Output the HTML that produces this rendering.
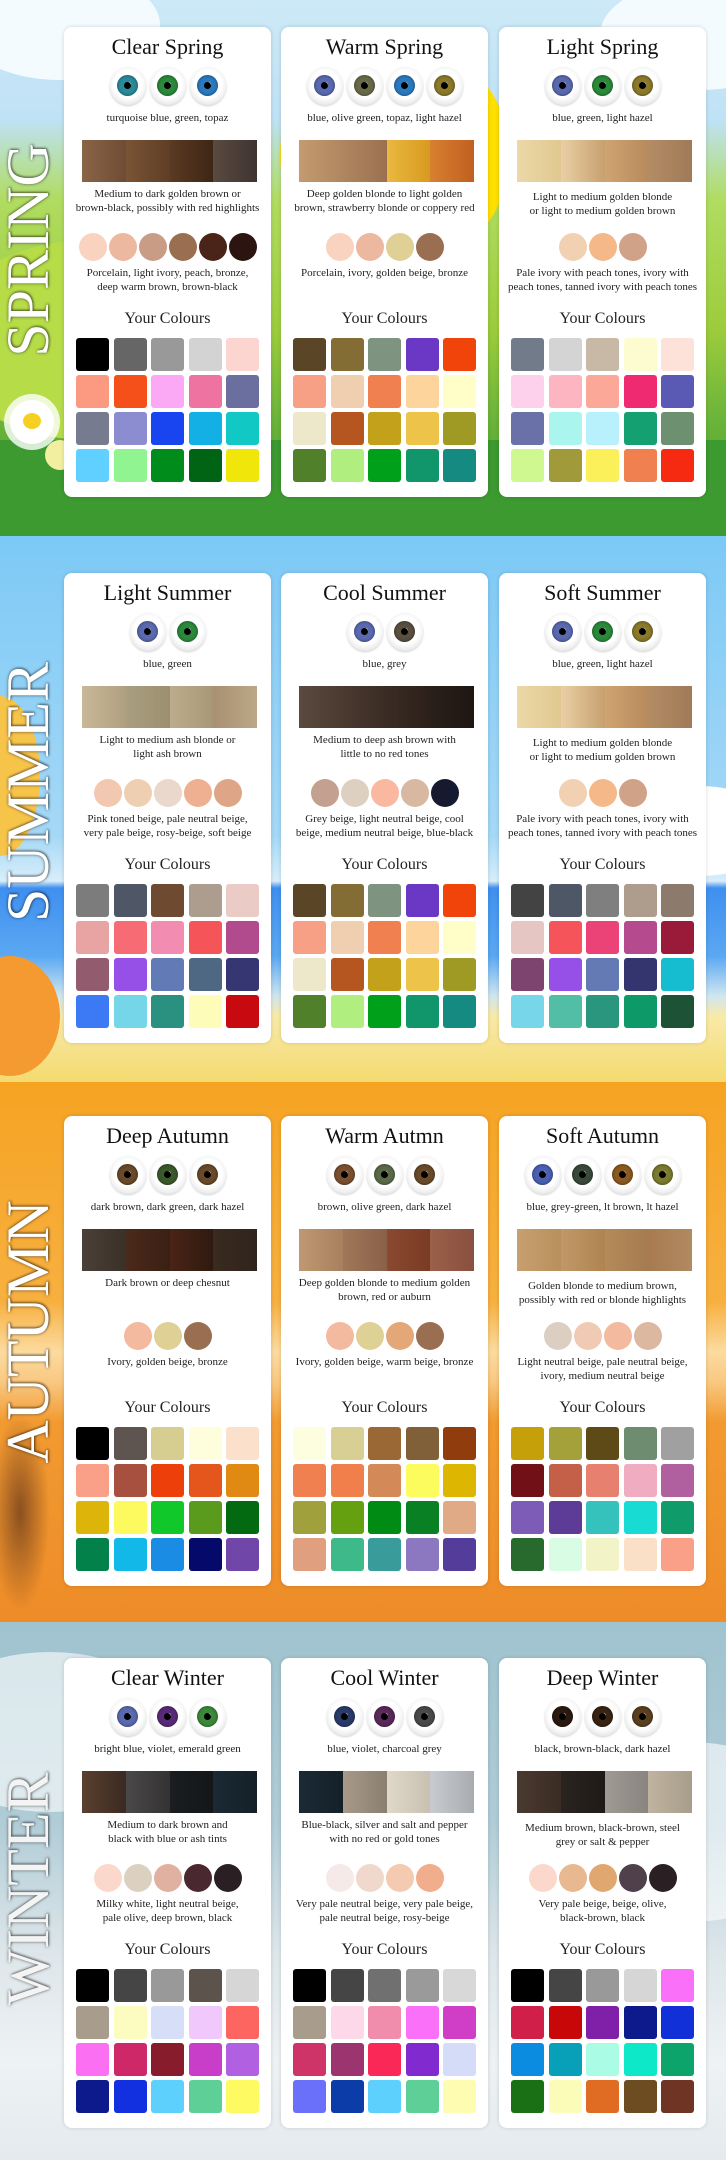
<!DOCTYPE html>
<html><head><meta charset="utf-8">
<style>
*{margin:0;padding:0;box-sizing:border-box}
body{width:726px;height:2160px;position:relative;overflow:hidden;font-family:"Liberation Serif",serif;color:#222}
.sec{position:absolute;left:0;width:726px;overflow:hidden}
.card{position:absolute;width:207px;height:470px;background:#fff;border-radius:8px;box-shadow:0 0 4px rgba(0,0,0,.15)}
.t{position:absolute;top:6px;left:0;width:100%;text-align:center;font-size:22px;line-height:28px;color:#111}
.eyes{position:absolute;top:40px;left:0;width:100%;text-align:center;height:38px;font-size:0}
.eye{display:inline-block;position:relative;width:36px;height:38px;margin:0 2px;border-radius:50%;background:radial-gradient(circle at 50% 45%,#fff 50%,#eee 70%,#c8c8c8 100%);box-shadow:0 1px 2px rgba(0,0,0,.2)}
.eye i{position:absolute;left:7.5px;top:8px;width:21px;height:21px;border-radius:50%;box-shadow:inset 0 0 3px rgba(0,0,0,.5)}
.eye i:after{content:"";position:absolute;left:7px;top:7px;width:7px;height:7px;border-radius:50%;background:#000;box-shadow:1px -1px 0 -1px #fff}
.tx{position:absolute;left:0;width:100%;text-align:center;font-size:11px;line-height:14px}
.et{top:84px}
.hair{position:absolute;top:113px;left:18px;width:175px;height:42px;display:flex}
.hair span{flex:1}
.ht{top:160px}
.skin{position:absolute;top:206px;left:0;width:100%;text-align:center;font-size:0;height:28px}
.skin span{display:inline-block;width:28px;height:28px;border-radius:50%;margin:0 1px}
.st{top:239px}
.yc{position:absolute;top:282px;left:0;width:100%;text-align:center;font-size:16px;line-height:20px}
.sw{position:absolute;top:311px;left:12px;width:190px;font-size:0}
.sw b{display:inline-block;width:33px;height:33px;border-radius:3px;margin:0 4.5px 4px 0;vertical-align:top}
.lab{position:absolute;left:-122px;width:300px;height:60px;line-height:60px;text-align:center;font-size:60px;color:#fff;transform:rotate(-90deg);text-shadow:0 0 3px rgba(0,0,0,.55),1px 1px 2px rgba(0,0,0,.4)}
</style></head><body>

<!-- SPRING -->
<div class="sec" style="top:0;height:536px;background:linear-gradient(#cde9f7 0,#bfe2f5 120px,#b0dc60 200px,#9ccc3c 330px,#6bb43a 420px,#3f9a2e 536px)">
 <div style="position:absolute;left:280px;top:40px;width:230px;height:230px;border-radius:50%;background:#ffe000"></div>
 <div style="position:absolute;left:-40px;top:-30px;width:200px;height:110px;border-radius:50%;background:#f4fbff"></div>
 <div style="position:absolute;left:600px;top:-20px;width:200px;height:110px;border-radius:50%;background:#f4fbff"></div>
 <div style="position:absolute;left:-60px;top:240px;width:300px;height:200px;border-radius:50%;background:#b6dc48"></div>
 <div style="position:absolute;left:0;top:440px;width:726px;height:96px;background:#3c9a30"></div>
 <div style="position:absolute;left:10px;top:400px;width:44px;height:44px;border-radius:50%;background:#fff;box-shadow:0 0 0 6px rgba(255,255,255,.8)"></div>
 <div style="position:absolute;left:23px;top:413px;width:18px;height:16px;border-radius:50%;background:#f5d020"></div>
 <div style="position:absolute;left:45px;top:440px;width:30px;height:30px;border-radius:50%;background:#f3efa0"></div>
</div>
<div class="lab" style="top:220px">SPRING</div>

<!-- SUMMER -->
<div class="sec" style="top:536px;height:546px;background:linear-gradient(#7cc9f6 0,#a5d8f6 300px,#d8eefa 345px,#3f8ff0 352px,#5aa8f2 420px,#cfe6f0 460px,#f8eaa8 480px,#f5da70 546px)">
 <div style="position:absolute;left:620px;top:250px;width:160px;height:90px;border-radius:50%;background:#fff"></div>
 <div style="position:absolute;left:-40px;top:420px;width:100px;height:120px;border-radius:50%;background:#f49a30"></div>
 <div style="position:absolute;left:-40px;top:160px;width:80px;height:160px;border-radius:50%;background:#f7c44a"></div>
</div>
<div class="lab" style="top:762px">SUMMER</div>

<!-- AUTUMN -->
<div class="sec" style="top:1082px;height:540px;background:linear-gradient(#f6a322 0,#f7b040 220px,#fcdba0 270px,#f9c880 300px,#f29a30 340px,#ee8c28 540px)">
 <div style="position:absolute;left:-10px;top:330px;width:60px;height:200px;background:radial-gradient(#8a5020,transparent 70%)"></div>
</div>
<div class="lab" style="top:1302px">AUTUMN</div>

<!-- WINTER -->
<div class="sec" style="top:1622px;height:538px;background:linear-gradient(#9fc3cf 0,#b0ccd6 200px,#dde6ea 330px,#eef2f4 440px,#e4eaee 538px)">
 <div style="position:absolute;left:-80px;top:30px;width:260px;height:160px;border-radius:50%;background:rgba(255,255,255,.6)"></div>
 <div style="position:absolute;left:560px;top:120px;width:260px;height:180px;border-radius:50%;background:rgba(255,255,255,.6)"></div>
</div>
<div class="lab" style="top:1859px;color:#f4f4f4">WINTER</div>

<!-- ===== SPRING CARDS ===== -->
<div class="card" style="left:64px;top:27px">
 <div class="t">Clear Spring</div>
 <div class="eyes"><span class="eye"><i style="background:#2a8a9a"></i></span><span class="eye"><i style="background:#2a8a3a"></i></span><span class="eye"><i style="background:#2a7ac0"></i></span></div>
 <div class="tx et">turquoise blue, green, topaz</div>
 <div class="hair"><span style="background:linear-gradient(90deg,#8a6446,#6e4c34)"></span><span style="background:linear-gradient(90deg,#7a5434,#5e3e26)"></span><span style="background:linear-gradient(90deg,#5a3a22,#3e2616)"></span><span style="background:linear-gradient(90deg,#5a4a40,#3e3430)"></span></div>
 <div class="tx ht">Medium to dark golden brown or<br>brown-black, possibly with red highlights</div>
 <div class="skin"><span style="background:#f9d3c0"></span><span style="background:#ecb8a0"></span><span style="background:#c99c85"></span><span style="background:#9a6e50"></span><span style="background:#4a2418"></span><span style="background:#2c1510"></span></div>
 <div class="tx st">Porcelain, light ivory, peach, bronze,<br>deep warm brown, brown-black</div>
 <div class="yc">Your Colours</div>
 <div class="sw"><b style="background:#000"></b><b style="background:#666"></b><b style="background:#999"></b><b style="background:#d3d3d3"></b><b style="background:#fdd5d0"></b><b style="background:#fb9a80"></b><b style="background:#f5501a"></b><b style="background:#fba8f5"></b><b style="background:#ef73a1"></b><b style="background:#6a6fa0"></b><b style="background:#777b90"></b><b style="background:#8b8dd0"></b><b style="background:#1845f0"></b><b style="background:#12b0e5"></b><b style="background:#12c8c5"></b><b style="background:#5fd0ff"></b><b style="background:#90f590"></b><b style="background:#008c1a"></b><b style="background:#006414"></b><b style="background:#f0e60a"></b></div>
</div>

<div class="card" style="left:281px;top:27px">
 <div class="t">Warm Spring</div>
 <div class="eyes"><span class="eye"><i style="background:#5a6ab0"></i></span><span class="eye"><i style="background:#6a6a4a"></i></span><span class="eye"><i style="background:#2a7ac0"></i></span><span class="eye"><i style="background:#8a7a2a"></i></span></div>
 <div class="tx et">blue, olive green, topaz, light hazel</div>
 <div class="hair"><span style="background:linear-gradient(90deg,#c49a70,#b08660)"></span><span style="background:linear-gradient(90deg,#b08660,#9a7050)"></span><span style="background:linear-gradient(90deg,#eab840,#d89a20)"></span><span style="background:linear-gradient(90deg,#d88030,#c06020)"></span></div>
 <div class="tx ht">Deep golden blonde to light golden<br>brown, strawberry blonde or coppery red</div>
 <div class="skin"><span style="background:#f9d3c0"></span><span style="background:#ecb8a0"></span><span style="background:#dfd096"></span><span style="background:#9a6e50"></span></div>
 <div class="tx st">Porcelain, ivory, golden beige, bronze</div>
 <div class="yc">Your Colours</div>
 <div class="sw"><b style="background:#5a4526"></b><b style="background:#846c35"></b><b style="background:#7f9480"></b><b style="background:#6a38c5"></b><b style="background:#f0440a"></b><b style="background:#f8a086"></b><b style="background:#efcfb0"></b><b style="background:#f08050"></b><b style="background:#fdd49c"></b><b style="background:#fffdc8"></b><b style="background:#eee8ca"></b><b style="background:#b55620"></b><b style="background:#c4a11a"></b><b style="background:#eec34a"></b><b style="background:#9f9a24"></b><b style="background:#50802a"></b><b style="background:#b0ee80"></b><b style="background:#00a01a"></b><b style="background:#10966a"></b><b style="background:#158a80"></b></div>
</div>

<div class="card" style="left:499px;top:27px">
 <div class="t">Light Spring</div>
 <div class="eyes"><span class="eye"><i style="background:#5a6ab0"></i></span><span class="eye"><i style="background:#2a8a3a"></i></span><span class="eye"><i style="background:#8a7a2a"></i></span></div>
 <div class="tx et">blue, green, light hazel</div>
 <div class="hair"><span style="background:linear-gradient(90deg,#ecd8a8,#e0c890)"></span><span style="background:linear-gradient(90deg,#e8d0a4,#c8a070)"></span><span style="background:linear-gradient(90deg,#d0a470,#b88a5c)"></span><span style="background:linear-gradient(90deg,#b48c64,#a07a58)"></span></div>
 <div class="tx ht" style="top:163px">Light to medium golden blonde<br>or light to medium golden brown</div>
 <div class="skin"><span style="background:#f2d0b2"></span><span style="background:#f5b888"></span><span style="background:#d0a288"></span></div>
 <div class="tx st">Pale ivory with peach tones, ivory with<br>peach tones, tanned ivory with peach tones</div>
 <div class="yc">Your Colours</div>
 <div class="sw"><b style="background:#717b8a"></b><b style="background:#d4d4d4"></b><b style="background:#c8b9a6"></b><b style="background:#fdfcd0"></b><b style="background:#fde2da"></b><b style="background:#fdd0ec"></b><b style="background:#fdb5c2"></b><b style="background:#fba898"></b><b style="background:#ef2a70"></b><b style="background:#5a5ab5"></b><b style="background:#6a70a8"></b><b style="background:#aaf5ee"></b><b style="background:#b8f0fb"></b><b style="background:#14a070"></b><b style="background:#6c9070"></b><b style="background:#d0f890"></b><b style="background:#a09a3a"></b><b style="background:#fbf05a"></b><b style="background:#f08050"></b><b style="background:#f52a10"></b></div>
</div>

<!-- ===== SUMMER CARDS ===== -->
<div class="card" style="left:64px;top:573px">
 <div class="t">Light Summer</div>
 <div class="eyes"><span class="eye"><i style="background:#5a6ab0"></i></span><span class="eye"><i style="background:#2a8a3a"></i></span></div>
 <div class="tx et">blue, green</div>
 <div class="hair"><span style="background:linear-gradient(90deg,#c8b898,#b0a080)"></span><span style="background:linear-gradient(90deg,#aa9e80,#9c9070)"></span><span style="background:linear-gradient(90deg,#bcac8c,#a89878)"></span><span style="background:linear-gradient(90deg,#a89070,#bca888)"></span></div>
 <div class="tx ht">Light to medium ash blonde or<br>light ash brown</div>
 <div class="skin"><span style="background:#f2c8b0"></span><span style="background:#efcfb2"></span><span style="background:#ead8cc"></span><span style="background:#eeb090"></span><span style="background:#dea586"></span></div>
 <div class="tx st">Pink toned beige, pale neutral beige,<br>very pale beige, rosy-beige, soft beige</div>
 <div class="yc">Your Colours</div>
 <div class="sw"><b style="background:#7c7c7c"></b><b style="background:#4f5666"></b><b style="background:#6d4a30"></b><b style="background:#ac9d8e"></b><b style="background:#ebcbc6"></b><b style="background:#e8a3a3"></b><b style="background:#f76b75"></b><b style="background:#f28cb0"></b><b style="background:#f55458"></b><b style="background:#b24a8e"></b><b style="background:#935c6e"></b><b style="background:#9650e8"></b><b style="background:#627ab5"></b><b style="background:#4e6884"></b><b style="background:#363672"></b><b style="background:#3c7af5"></b><b style="background:#74d6e8"></b><b style="background:#2a9080"></b><b style="background:#fdfcb8"></b><b style="background:#c80a10"></b></div>
</div>

<div class="card" style="left:281px;top:573px">
 <div class="t">Cool Summer</div>
 <div class="eyes"><span class="eye"><i style="background:#5a6ab0"></i></span><span class="eye"><i style="background:#5a5040"></i></span></div>
 <div class="tx et">blue, grey</div>
 <div class="hair"><span style="background:linear-gradient(90deg,#5a4a40,#4a3a30)"></span><span style="background:linear-gradient(90deg,#4a3a30,#3a2c24)"></span><span style="background:linear-gradient(90deg,#3a2c24,#2c2019)"></span><span style="background:linear-gradient(90deg,#2a201a,#1e1612)"></span></div>
 <div class="tx ht">Medium to deep ash brown with<br>little to no red tones</div>
 <div class="skin"><span style="background:#c4a090"></span><span style="background:#ddd0c0"></span><span style="background:#fab8a0"></span><span style="background:#d8b8a0"></span><span style="background:#161a30"></span></div>
 <div class="tx st">Grey beige, light neutral beige, cool<br>beige, medium neutral beige, blue-black</div>
 <div class="yc">Your Colours</div>
 <div class="sw"><b style="background:#5a4526"></b><b style="background:#846c35"></b><b style="background:#7f9480"></b><b style="background:#6a38c5"></b><b style="background:#f0440a"></b><b style="background:#f8a086"></b><b style="background:#efcfb0"></b><b style="background:#f08050"></b><b style="background:#fdd49c"></b><b style="background:#fffdc8"></b><b style="background:#eee8ca"></b><b style="background:#b55620"></b><b style="background:#c4a11a"></b><b style="background:#eec34a"></b><b style="background:#9f9a24"></b><b style="background:#50802a"></b><b style="background:#b0ee80"></b><b style="background:#00a01a"></b><b style="background:#10966a"></b><b style="background:#158a80"></b></div>
</div>

<div class="card" style="left:499px;top:573px">
 <div class="t">Soft Summer</div>
 <div class="eyes"><span class="eye"><i style="background:#5a6ab0"></i></span><span class="eye"><i style="background:#2a8a3a"></i></span><span class="eye"><i style="background:#8a7a2a"></i></span></div>
 <div class="tx et">blue, green, light hazel</div>
 <div class="hair"><span style="background:linear-gradient(90deg,#ecd8a8,#e0c890)"></span><span style="background:linear-gradient(90deg,#e8d0a4,#c8a070)"></span><span style="background:linear-gradient(90deg,#d0a470,#b88a5c)"></span><span style="background:linear-gradient(90deg,#b48c64,#a07a58)"></span></div>
 <div class="tx ht" style="top:163px">Light to medium golden blonde<br>or light to medium golden brown</div>
 <div class="skin"><span style="background:#f2d0b2"></span><span style="background:#f5b888"></span><span style="background:#d0a288"></span></div>
 <div class="tx st">Pale ivory with peach tones, ivory with<br>peach tones, tanned ivory with peach tones</div>
 <div class="yc">Your Colours</div>
 <div class="sw"><b style="background:#434343"></b><b style="background:#4e5766"></b><b style="background:#7f7f7f"></b><b style="background:#ae9c8c"></b><b style="background:#8c7b6c"></b><b style="background:#e5c6c2"></b><b style="background:#f5545a"></b><b style="background:#eb4278"></b><b style="background:#b64a8e"></b><b style="background:#9a1a3a"></b><b style="background:#7e4470"></b><b style="background:#9650e8"></b><b style="background:#647ab5"></b><b style="background:#34346e"></b><b style="background:#16bcd0"></b><b style="background:#78d6ea"></b><b style="background:#52bea6"></b><b style="background:#2a967e"></b><b style="background:#0e9a68"></b><b style="background:#1e5236"></b></div>
</div>

<!-- ===== AUTUMN CARDS ===== -->
<div class="card" style="left:64px;top:1116px">
 <div class="t">Deep Autumn</div>
 <div class="eyes"><span class="eye"><i style="background:#6a4a2a"></i></span><span class="eye"><i style="background:#3a5a2a"></i></span><span class="eye"><i style="background:#6a4a2a"></i></span></div>
 <div class="tx et">dark brown, dark green, dark hazel</div>
 <div class="hair"><span style="background:linear-gradient(90deg,#4a4038,#3a3028)"></span><span style="background:linear-gradient(90deg,#4a2a1a,#3a2014)"></span><span style="background:linear-gradient(90deg,#4a2416,#2e1a10)"></span><span style="background:linear-gradient(90deg,#3a2a20,#30241c)"></span></div>
 <div class="tx ht">Dark brown or deep chesnut</div>
 <div class="skin"><span style="background:#f3baa0"></span><span style="background:#dfd096"></span><span style="background:#9a6e50"></span></div>
 <div class="tx st">Ivory, golden beige, bronze</div>
 <div class="yc">Your Colours</div>
 <div class="sw"><b style="background:#000"></b><b style="background:#5e5550"></b><b style="background:#d6cd90"></b><b style="background:#fefedc"></b><b style="background:#fbe0cc"></b><b style="background:#fba088"></b><b style="background:#a85040"></b><b style="background:#ec3f0a"></b><b style="background:#e4561c"></b><b style="background:#e08a14"></b><b style="background:#dcb40a"></b><b style="background:#fdfa60"></b><b style="background:#10c82a"></b><b style="background:#5a9a1c"></b><b style="background:#046a12"></b><b style="background:#02824a"></b><b style="background:#12b8e8"></b><b style="background:#1a8ce4"></b><b style="background:#050a6a"></b><b style="background:#7046a8"></b></div>
</div>

<div class="card" style="left:281px;top:1116px">
 <div class="t">Warm Autmn</div>
 <div class="eyes"><span class="eye"><i style="background:#7a5030"></i></span><span class="eye"><i style="background:#5a6a4a"></i></span><span class="eye"><i style="background:#6a4a2a"></i></span></div>
 <div class="tx et">brown, olive green, dark hazel</div>
 <div class="hair"><span style="background:linear-gradient(90deg,#c09870,#a88060)"></span><span style="background:linear-gradient(90deg,#a07858,#8a6048)"></span><span style="background:linear-gradient(90deg,#8a4a30,#7a3a24)"></span><span style="background:linear-gradient(90deg,#9a6048,#8a5040)"></span></div>
 <div class="tx ht">Deep golden blonde to medium golden<br>brown, red or auburn</div>
 <div class="skin"><span style="background:#f3baa0"></span><span style="background:#dfd096"></span><span style="background:#e4a878"></span><span style="background:#9a6e50"></span></div>
 <div class="tx st">Ivory, golden beige, warm beige, bronze</div>
 <div class="yc">Your Colours</div>
 <div class="sw"><b style="background:#fdfde0"></b><b style="background:#d8cf94"></b><b style="background:#9a6834"></b><b style="background:#806038"></b><b style="background:#903c0c"></b><b style="background:#f08050"></b><b style="background:#f07f4c"></b><b style="background:#d48a58"></b><b style="background:#fcfc5e"></b><b style="background:#dcb600"></b><b style="background:#a0a03c"></b><b style="background:#64a010"></b><b style="background:#008c14"></b><b style="background:#0a8024"></b><b style="background:#e0aa86"></b><b style="background:#e0a080"></b><b style="background:#3eba8a"></b><b style="background:#3a9c9a"></b><b style="background:#8c78c0"></b><b style="background:#543c9a"></b></div>
</div>

<div class="card" style="left:499px;top:1116px">
 <div class="t">Soft Autumn</div>
 <div class="eyes"><span class="eye"><i style="background:#4a60b0"></i></span><span class="eye"><i style="background:#3a4a3a"></i></span><span class="eye"><i style="background:#8a5a20"></i></span><span class="eye"><i style="background:#7a7a30"></i></span></div>
 <div class="tx et">blue, grey-green, lt brown, lt hazel</div>
 <div class="hair"><span style="background:linear-gradient(90deg,#c8a070,#b8905c)"></span><span style="background:linear-gradient(90deg,#c09868,#b08450)"></span><span style="background:linear-gradient(90deg,#b48a5a,#a47c50)"></span><span style="background:linear-gradient(90deg,#a87a52,#b08a60)"></span></div>
 <div class="tx ht" style="top:163px">Golden blonde to medium brown,<br>possibly with red or blonde highlights</div>
 <div class="skin"><span style="background:#dccfc2"></span><span style="background:#f0cab2"></span><span style="background:#f3baa0"></span><span style="background:#dcb8a0"></span></div>
 <div class="tx st">Light neutral beige, pale neutral beige,<br>ivory, medium neutral beige</div>
 <div class="yc">Your Colours</div>
 <div class="sw"><b style="background:#c6a008"></b><b style="background:#a4a03a"></b><b style="background:#5e4a16"></b><b style="background:#6e8c70"></b><b style="background:#a0a0a0"></b><b style="background:#721018"></b><b style="background:#c46048"></b><b style="background:#e88070"></b><b style="background:#f0acc0"></b><b style="background:#b0609e"></b><b style="background:#7c5cb6"></b><b style="background:#5c3c96"></b><b style="background:#36c2bc"></b><b style="background:#18dcd4"></b><b style="background:#109c6a"></b><b style="background:#286a2e"></b><b style="background:#d8fce4"></b><b style="background:#f2f4c8"></b><b style="background:#fbe0c8"></b><b style="background:#fba088"></b></div>
</div>

<!-- ===== WINTER CARDS ===== -->
<div class="card" style="left:64px;top:1658px">
 <div class="t">Clear Winter</div>
 <div class="eyes"><span class="eye"><i style="background:#5a6ab0"></i></span><span class="eye"><i style="background:#5a2a7a"></i></span><span class="eye"><i style="background:#3a8a3a"></i></span></div>
 <div class="tx et">bright blue, violet, emerald green</div>
 <div class="hair"><span style="background:linear-gradient(90deg,#5a4030,#3a2a20)"></span><span style="background:linear-gradient(90deg,#4a4848,#343232)"></span><span style="background:linear-gradient(90deg,#1a1e20,#141618)"></span><span style="background:linear-gradient(90deg,#1a2a34,#142028)"></span></div>
 <div class="tx ht">Medium to dark brown and<br>black with blue or ash tints</div>
 <div class="skin"><span style="background:#fcd8cc"></span><span style="background:#dcd0c0"></span><span style="background:#e0b0a0"></span><span style="background:#4a2830"></span><span style="background:#2a2024"></span></div>
 <div class="tx st">Milky white, light neutral beige,<br>pale olive, deep brown, black</div>
 <div class="yc">Your Colours</div>
 <div class="sw"><b style="background:#000"></b><b style="background:#454545"></b><b style="background:#999"></b><b style="background:#5c544c"></b><b style="background:#d6d6d6"></b><b style="background:#a89d8c"></b><b style="background:#fdfcc0"></b><b style="background:#d6def8"></b><b style="background:#f0c8fc"></b><b style="background:#fd6660"></b><b style="background:#fb70f2"></b><b style="background:#cf2868"></b><b style="background:#861c2c"></b><b style="background:#c93ec8"></b><b style="background:#b060e0"></b><b style="background:#0c1a8c"></b><b style="background:#1230e0"></b><b style="background:#5ed0fd"></b><b style="background:#5ecf96"></b><b style="background:#fdfa62"></b></div>
</div>

<div class="card" style="left:281px;top:1658px">
 <div class="t">Cool Winter</div>
 <div class="eyes"><span class="eye"><i style="background:#2a3a6a"></i></span><span class="eye"><i style="background:#5a2a5a"></i></span><span class="eye"><i style="background:#4a4a4a"></i></span></div>
 <div class="tx et">blue, violet, charcoal grey</div>
 <div class="hair"><span style="background:linear-gradient(90deg,#1a2a34,#142028)"></span><span style="background:linear-gradient(90deg,#a89a88,#8a7e70)"></span><span style="background:linear-gradient(90deg,#e0d8c8,#c8c0b0)"></span><span style="background:linear-gradient(90deg,#c8ccd0,#a8acb0)"></span></div>
 <div class="tx ht">Blue-black, silver and salt and pepper<br>with no red or gold tones</div>
 <div class="skin"><span style="background:#f6eae8"></span><span style="background:#f0d8cc"></span><span style="background:#f4cab0"></span><span style="background:#f0ae8c"></span></div>
 <div class="tx st">Very pale neutral beige, very pale beige,<br>pale neutral beige, rosy-beige</div>
 <div class="yc">Your Colours</div>
 <div class="sw"><b style="background:#000"></b><b style="background:#454545"></b><b style="background:#707070"></b><b style="background:#9a9a9a"></b><b style="background:#d8d8d8"></b><b style="background:#a89d8c"></b><b style="background:#fcd8e8"></b><b style="background:#f08cac"></b><b style="background:#fb70f8"></b><b style="background:#d03ec8"></b><b style="background:#cf3468"></b><b style="background:#9c3470"></b><b style="background:#fa2856"></b><b style="background:#802ad0"></b><b style="background:#d4dcf8"></b><b style="background:#6a70fa"></b><b style="background:#0c3ca8"></b><b style="background:#5ed0fd"></b><b style="background:#5ecf96"></b><b style="background:#fdfcb0"></b></div>
</div>

<div class="card" style="left:499px;top:1658px">
 <div class="t">Deep Winter</div>
 <div class="eyes"><span class="eye"><i style="background:#2a1a10"></i></span><span class="eye"><i style="background:#3a2414"></i></span><span class="eye"><i style="background:#5a4020"></i></span></div>
 <div class="tx et">black, brown-black, dark hazel</div>
 <div class="hair"><span style="background:linear-gradient(90deg,#4a3a30,#3a2c24)"></span><span style="background:linear-gradient(90deg,#2a2420,#1e1a18)"></span><span style="background:linear-gradient(90deg,#a09a94,#8a8480)"></span><span style="background:linear-gradient(90deg,#c0b4a0,#a89c8a)"></span></div>
 <div class="tx ht" style="top:163px">Medium brown, black-brown, steel<br>grey or salt &amp; pepper</div>
 <div class="skin"><span style="background:#fcd8cc"></span><span style="background:#e8b890"></span><span style="background:#e0a870"></span><span style="background:#50404c"></span><span style="background:#2a2024"></span></div>
 <div class="tx st">Very pale beige, beige, olive,<br>black-brown, black</div>
 <div class="yc">Your Colours</div>
 <div class="sw"><b style="background:#000"></b><b style="background:#454545"></b><b style="background:#999"></b><b style="background:#d6d6d6"></b><b style="background:#fb70f8"></b><b style="background:#d0204a"></b><b style="background:#c80808"></b><b style="background:#8020a8"></b><b style="background:#0c1a8c"></b><b style="background:#1230d8"></b><b style="background:#0c8ce0"></b><b style="background:#08a0b8"></b><b style="background:#aafce4"></b><b style="background:#0ce8c8"></b><b style="background:#0ca46a"></b><b style="background:#1a7014"></b><b style="background:#fbfcb8"></b><b style="background:#e06c24"></b><b style="background:#6e4c22"></b><b style="background:#703424"></b></div>
</div>

</body></html>
